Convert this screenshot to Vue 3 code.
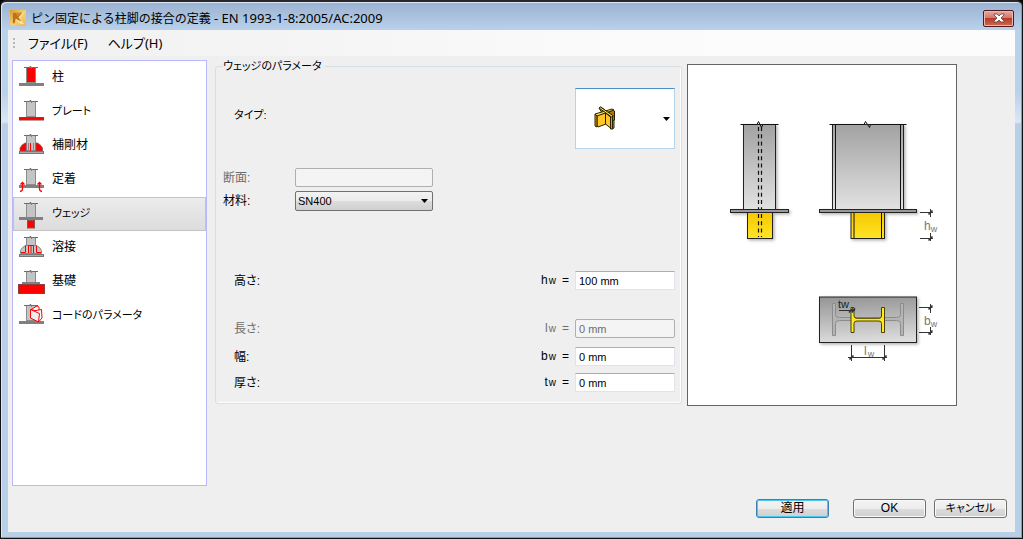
<script setup>
import { ref } from 'vue'

const items = [
  { id: 'column', label: '柱' },
  { id: 'plate', label: 'プレート', kana: true },
  { id: 'stiffener', label: '補剛材' },
  { id: 'anchor', label: '定着' },
  { id: 'wedge', label: 'ウェッジ', kana: true },
  { id: 'weld', label: '溶接' },
  { id: 'foundation', label: '基礎' },
  { id: 'code', label: 'コードのパラメータ', kana: true },
]
const active = ref('wedge')
const section = ref('')
const material = ref('SN400')

const dims = ref([
  { id: 'h', label: '高さ:', value: '100 mm', disabled: false },
  { id: 'l', label: '長さ:', value: '0 mm', disabled: true },
  { id: 'b', label: '幅:', value: '0 mm', disabled: false },
  { id: 't', label: '厚さ:', value: '0 mm', disabled: false },
])
</script>

<template>
  <div class="window">
    <header class="titlebar">
      <svg class="logo" viewBox="0 0 17 17" aria-hidden="true">
        <defs>
          <linearGradient id="logoBg" x1="0" y1="0" x2="1" y2="1">
            <stop offset="0" stop-color="#dc9a2c" />
            <stop offset="0.5" stop-color="#f6cf78" />
            <stop offset="1" stop-color="#eeb94a" />
          </linearGradient>
        </defs>
        <rect width="17" height="17" fill="url(#logoBg)" />
        <path d="M9 3h6L10 9l5 6h-4L6 10z" fill="#fbe3a6" />
        <path d="M3 3h10L9 8l3 4-3-1-3-2-1 5H3z" fill="#b8741a" />
        <path d="M6 3h7L8 7z" fill="#d08c2c" />
      </svg>
      <h1>ピン固定による柱脚の接合の定義<span class="latin"> - EN 1993-1-8:2005/AC:2009</span></h1>
      <button class="close" type="button" aria-label="閉じる">
        <svg viewBox="0 0 12 10" aria-hidden="true">
          <path d="M1 1h3l2 2 2-2h3v1L8 5l3 3v1H8L6 7 4 9H1V8l3-3-3-3z" fill="#fff" stroke="#5c4146" stroke-width="0.8" />
        </svg>
      </button>
    </header>

    <div class="client">
      <nav class="menubar">
        <span class="grip"><i></i><i></i><i></i></span>
        <button type="button">ファイル(F)</button>
        <button type="button">ヘルプ(H)</button>
      </nav>

      <main class="content">
        <ul class="list">
          <li v-for="it in items" :key="it.id">
            <button type="button" :class="{ selected: active === it.id }" @click="active = it.id">
              <svg viewBox="0 0 28 30" aria-hidden="true">
                <rect x="9.500" y="4.500" width="9" height="15" :fill="it.id === 'column' ? '#f00' : '#c4c4c4'" stroke="#8c8c8c" />
                <path d="M7 4.500h5.500l1-1.500 1 2.500 1-1H21" fill="none" stroke="#6c6c6c" />
                <rect v-if="it.id === 'column' || it.id === 'anchor' || it.id === 'code'" x="2" y="20" width="25" height="3" fill="#808080" />
                <rect v-if="it.id === 'plate'" x="2.500" y="20.500" width="24" height="2.500" fill="#f00" stroke="#7c4444" />
                <g v-if="it.id === 'stiffener'">
                  <path d="M3 20v-3q1-3 5-5h1v8zM25.500 20v-3q-1-3-5-5h-1.500v8z" fill="#f00" stroke="#805050" stroke-width="0.7" />
                  <path d="M11.500 12v8M16.500 12v8" stroke="#888" />
                  <path d="M13.500 12v8" stroke="#f00" />
                  <rect x="2.500" y="20.500" width="24" height="2" fill="#aaa" stroke="#777" />
                </g>
                <g v-if="it.id === 'anchor'" fill="none" stroke="#f00" stroke-width="1.300">
                  <path d="M5.500 17v7q0 2-2.500 2.500M3.500 19.500l2-2 2 2M22.500 17v7q0 2 2.500 2.500M20.500 19.500l2-2 2 2" />
                </g>
                <g v-if="it.id === 'wedge'">
                  <rect x="2" y="18" width="24" height="3" fill="#808080" />
                  <rect x="10.500" y="21.500" width="7" height="7.500" fill="#f00" stroke="#905050" />
                </g>
                <g v-if="it.id === 'weld'">
                  <path d="M3.500 20.500v-3q1-3 5-5h11q4 2 5 5v3z" fill="#c4c4c4" stroke="#888" />
                  <path d="M4 19.500h4.500v-7M11.500 20v-7.500h5V20M14 13v7M19.500 12.500v7H24" fill="none" stroke="#f00" />
                  <rect x="2.500" y="21.500" width="24" height="2" fill="#aaa" stroke="#777" />
                </g>
                <g v-if="it.id === 'foundation'">
                  <rect x="5" y="15" width="18" height="3" fill="#808080" />
                  <rect x="1.500" y="17.500" width="26" height="9" fill="#f00" stroke="#904040" />
                </g>
                <g v-if="it.id === 'code'" stroke="#f00" stroke-linejoin="round">
                  <path d="M14 8.500l6-3.500 2 1v5z" fill="#fff" />
                  <path d="M16 10l8.500-1.500L25 17l-3 3.500-5-2z" fill="#fff" />
                  <path d="M13.500 8.500v8.500l8 4 1-8.500z" fill="#eee" />
                </g>
              </svg>
              <span :class="{ kana: it.kana }">{{ it.label }}</span>
            </button>
          </li>
        </ul>

        <fieldset class="params">
          <legend class="kana">ウェッジのパラメータ</legend>

          <div class="row type-row">
            <label for="type" class="inset kana">タイプ:</label>
            <button id="type" class="type" type="button" aria-haspopup="listbox">
              <svg class="cross" viewBox="594 107 22 25" aria-hidden="true">
                <g stroke="#2a2100" stroke-linejoin="round">
                  <path d="M599 109l2-1 13 10v11l-2 1z" fill="#d9a400" />
                  <path d="M606 115l7-4 1.500 1v9l-3 1z" fill="#a87c00" />
                  <path d="M597 116l8-2 1 1v10l-8 3-1-1z" fill="#ffc828" />
                  <path d="M605.500 114l5 4v11l-5-4z" fill="#ffc828" />
                  <path d="M610.500 118l2-1v13h-2z" fill="#d9a400" />
                  <path d="M595 115l17-5 2 1-17 6z" fill="#ffdc50" />
                  <path d="M599 109l1.500-1 13 9-2 1z" fill="#ffdc50" />
                  <path d="M595 115l2 2v11l-2-1z" fill="#d9a400" />
                </g>
              </svg>
              <svg class="arrow" viewBox="0 0 7 4" aria-hidden="true"><path d="M0 0h7L3.500 4z" /></svg>
            </button>
          </div>

          <div class="row pair section-row off">
            <label for="section">断面:</label>
            <input id="section" v-model="section" type="text" disabled />
          </div>
          <div class="row pair">
            <label for="material">材料:</label>
            <span class="select">
              <select id="material" v-model="material">
                <option>SN400</option>
              </select>
              <svg class="arrow" viewBox="0 0 7 4" aria-hidden="true"><path d="M0 0h7L3.500 4z" /></svg>
            </span>
          </div>

          <div v-for="d in dims" :key="d.id" class="row dim" :class="['dim-' + d.id, { off: d.disabled }]">
            <label :for="'dim-' + d.id" class="inset">{{ d.label }}</label>
            <span class="symbol"><b>{{ d.id }}</b><small>w</small><b>=</b></span>
            <input :id="'dim-' + d.id" v-model="d.value" type="text" :disabled="d.disabled" />
          </div>
        </fieldset>

        <figure class="preview">
          <svg viewBox="688 65 268 340" role="img" aria-label="ウェッジ">
            <defs>
              <linearGradient id="steel" x1="0" y1="0" x2="0" y2="1">
                <stop offset="0" stop-color="#a2a2a2" />
                <stop offset="1" stop-color="#e2e2e2" />
              </linearGradient>
              <linearGradient id="gold" x1="0" y1="0" x2="0" y2="1">
                <stop offset="0" stop-color="#f6c800" />
                <stop offset="1" stop-color="#ffe428" />
              </linearGradient>
              <linearGradient id="base" x1="0.200" y1="0" x2="0.300" y2="1">
                <stop offset="0" stop-color="#969696" />
                <stop offset="1" stop-color="#dcdcdc" />
              </linearGradient>
              <filter id="shade" x="-10%" y="-10%" width="125%" height="125%">
                <feDropShadow dx="1.500" dy="1.500" stdDeviation="1.500" flood-color="#000" flood-opacity="0.300" />
              </filter>
            </defs>

            <g filter="url(#shade)" stroke="#222">
              <rect x="743.500" y="124.500" width="32" height="85" fill="url(#steel)" />
              <rect x="747.500" y="212.500" width="25" height="26" fill="url(#gold)" />
              <rect x="730.500" y="209.500" width="58" height="3" fill="#999" />
              <rect x="832.500" y="124.500" width="71" height="85" fill="url(#steel)" />
              <rect x="851" y="212.500" width="33.500" height="26" fill="url(#gold)" />
              <rect x="819.500" y="209.500" width="97" height="3" fill="#999" />
              <rect x="819.500" y="297" width="97" height="45.500" fill="url(#base)" />
            </g>

            <g fill="none" stroke="#111">
              <path d="M758.500 127v82M761.500 127v82M758.500 214v23M761.500 214v23" stroke-dasharray="4 3.300" stroke-width="1.200" />
              <path d="M740.500 124.500H757l1.500-3 3 6 1.500-3H778.500M829.500 124.500H864l1.500-3 4 6 1-3H906.500" />
              <path d="M835.500 125v84M900.500 125v84M854 213v25M881.500 213v25" />
            </g>

            <path d="M832.500 303.500h3v11q0 3 4 3h57q4 0 4-3v-11h3v32h-3v-12q0-3-4-3h-57q-4 0-4 3v12h-3z" fill="#b4b4b4" stroke="#8c8c8c" />
            <path d="M851 307.500h3v8.500q0 2.300 3 2.300h22q2.500 0 2.500-2.300v-8.500h3v25h-3v-9q0-2.500-2.500-2.500h-22q-3 0-3 2.500v9h-3z" fill="#ffe91c" stroke="#4a4200" />

            <g fill="none" stroke="#333">
              <path d="M920 212.500h13M920 238.500h13M930.500 209v8M930.500 233v8" />
              <path d="M919 307.500h13.500M919 332.500h13.500M930.500 304v9M930.500 327v8" />
              <path d="M851.500 345v16M884.500 345v16M848 357.500h39M839 310.500h16" />
              <path d="M928.500 214.500l4-4M928.500 240.500l4-4M928.500 309.500l4-4M928.500 334.500l4-4M849.500 359.500l4-4M882.500 359.500l4-4M849 312.500l4-4M852 312.500l3-4" stroke-width="1.600" />
            </g>

            <g class="drawing-text">
              <text x="924" y="230">h<tspan dy="2" class="sub">w</tspan></text>
              <text x="924" y="325">b<tspan dy="2" class="sub">w</tspan></text>
              <text x="864" y="355">l<tspan dy="2" dx="1" class="sub">w</tspan></text>
              <text x="838" y="308" class="dark">tw</text>
            </g>
          </svg>
        </figure>
      </main>

      <footer class="actions">
        <button type="button" class="default">適用</button>
        <button type="button">OK</button>
        <button type="button" class="kana">キャンセル</button>
      </footer>
    </div>
  </div>
</template>

<style>
body {
  margin: 0;
  background: #000;
}
</style>

<style scoped>
* {
  box-sizing: border-box;
}

.window {
  display: flex;
  flex-direction: column;
  min-height: 100vh;
  padding: 0 6px 6px;
  border: 1px solid #111;
  border-top: 2px solid #2a2528;
  border-radius: 6px 6px 0 0;
  background: linear-gradient(#9ab2d0, #b9d1ea 28px, #b9d1ea 90px, #dbe7f5 120px, #b9cfe8 122px);
  box-shadow: inset -1px -1px 0 #3cbcdc, inset 1px 1px 0 #d8e8f8;
  color: #000;
  font-family: "Liberation Sans", "Noto Sans CJK JP", sans-serif;
  font-feature-settings: "palt";
  font-size: 12px;
  line-height: 16px;
}

button,
input,
select {
  font: inherit;
  font-feature-settings: inherit;
  color: inherit;
}

.titlebar {
  display: flex;
  align-items: center;
  height: 28px;
  padding: 4px 2px 0 3px;
}

.logo {
  width: 16px;
  height: 16px;
  margin-right: 5px;
}

h1 {
  flex: 1;
  margin: 0;
  font-family: "Noto Sans", "Noto Sans CJK JP", sans-serif;
  font-size: 12px;
  font-weight: 400;
  font-feature-settings: normal;
}

.latin {
  font-size: 13px;
}

.close {
  display: flex;
  align-items: center;
  justify-content: center;
  width: 31px;
  height: 17px;
  padding: 0;
  border: 1px solid #4e1a22;
  border-radius: 2px;
  background: linear-gradient(#e6a99c, #d4786a 45%, #b83a28 50%, #d06a50);
  box-shadow: inset 0 0 0 1px #f0b8ac;
}

.close svg {
  width: 12px;
  height: 10px;
}

.client {
  display: flex;
  flex: 1;
  flex-direction: column;
  margin: 0 1px;
  background: #efefef;
}

.menubar {
  display: flex;
  align-items: center;
  height: 26px;
  padding: 0 5px;
  background: linear-gradient(90deg, #f0f0f0, #fcfcfc 70%);
}

.menubar button {
  margin-right: 20px;
  padding: 0;
  border: 0;
  background: none;
  font-family: "Noto Sans", "Noto Sans CJK JP", sans-serif;
  font-size: 13px;
}

.grip {
  display: grid;
  gap: 2px;
  margin-right: 13px;
}

.grip i {
  width: 2px;
  height: 2px;
  background: #b8b8b8;
}

.content {
  display: flex;
  flex: 1;
  align-items: flex-start;
  padding: 4px 58px 0 4px;
}

.list {
  align-self: stretch;
  width: 195px;
  margin: 0;
  padding: 0;
  border: 1px solid #b8b8fa;
  background: #fff;
  list-style: none;
}

.list button {
  display: flex;
  align-items: center;
  gap: 7px;
  width: 100%;
  height: 34px;
  padding: 0 4px;
  border: 0;
  background: none;
  text-align: left;
}

.list button.selected {
  background: linear-gradient(#ececec, #dcdcdc);
  box-shadow: inset 0 0 0 1px #c4c4c4;
}

.list svg {
  width: 28px;
  height: 30px;
}

.list span {
  padding-bottom: 2px;
}

.kana,
.actions .kana {
  font-size: 11px;
}

.params {
  flex: 1;
  min-width: 0;
  margin: 0 5px 0 8px;
  padding: 16px 6px 11px 7px;
  border: 1px solid #d5dfe5;
  border-radius: 3px;
  box-shadow: inset -1px -1px 0 #fff;
}

legend {
  padding: 0 2px 0 0;
  line-height: 12px;
}

.row {
  display: flex;
  align-items: center;
}

.inset {
  padding-left: 11px;
}

.off {
  color: #6d6d6d;
}

.type-row {
  justify-content: space-between;
  margin-bottom: 19px;
}

.type-row label {
  padding-bottom: 8px;
}

.type {
  display: flex;
  align-items: center;
  justify-content: space-between;
  width: 100px;
  height: 61px;
  padding: 0 4px 0 18px;
  border: 1px solid #b5d4ea;
  border-top-color: #4a90c8;
  background: #fff;
}

.cross {
  width: 22px;
  height: 25px;
}

.arrow {
  width: 7px;
  height: 4px;
}

.pair label {
  width: 72px;
}

.pair input,
.pair .select {
  width: 138px;
}

.section-row {
  margin-bottom: 4px;
}

input {
  height: 19px;
  padding: 0 3px;
  border: 1px solid #e2e3ea;
  border-top-color: #abadb3;
  background: #fff;
  font-size: 11px;
}

input:disabled {
  border-color: #afafaf;
  border-radius: 2px;
  background: #f4f4f4;
  color: #6d6d6d;
}

.select {
  position: relative;
}

.select select {
  display: block;
  width: 100%;
  height: 20px;
  padding: 0 16px 0 2px;
  border: 1px solid #707070;
  border-radius: 2px;
  appearance: none;
  background: linear-gradient(#f2f2f2, #ebebeb 50%, #dddddd 50%, #cfcfcf);
  font-size: 11px;
}

.select .arrow {
  position: absolute;
  top: 8px;
  right: 5px;
  pointer-events: none;
}

.dim input {
  width: 100px;
}

.dim-h {
  margin-top: 60px;
}

.dim-l {
  margin-top: 29px;
}

.dim-b {
  margin-top: 9px;
}

.dim-t {
  margin-top: 7px;
}

.symbol {
  display: flex;
  align-items: baseline;
  justify-content: flex-end;
  margin: 0 6px 0 auto;
}

.symbol b {
  font-size: 12px;
  font-weight: 400;
}

.symbol small {
  margin: 0 6px 0 1px;
  font-size: 10px;
}

.preview {
  width: 270px;
  margin: 4px 0 0;
  border: 1px solid #646464;
  background: #fff;
}

.preview svg {
  display: block;
  width: 100%;
}

.drawing-text {
  font-family: "Liberation Sans", sans-serif;
  font-size: 12px;
  fill: #777;
}

.drawing-text .sub {
  font-size: 9px;
}

.drawing-text .dark {
  font-size: 11px;
  fill: #222;
}

.actions {
  display: flex;
  justify-content: flex-end;
  gap: 8px;
  padding: 13px 8px 14px;
}

.actions button {
  width: 73px;
  height: 19px;
  padding: 0;
  border: 1px solid #707070;
  border-radius: 3px;
  background: linear-gradient(#f4f4f4, #ececec 50%, #dddddd 50%, #cfcfcf);
  box-shadow: inset 0 0 0 1px #fafafa;
  line-height: 15px;
}

.actions .default {
  margin-right: 16px;
  border-color: #3c7fb1;
  box-shadow: inset 0 0 0 1px #4cc8ee;
}
</style>
